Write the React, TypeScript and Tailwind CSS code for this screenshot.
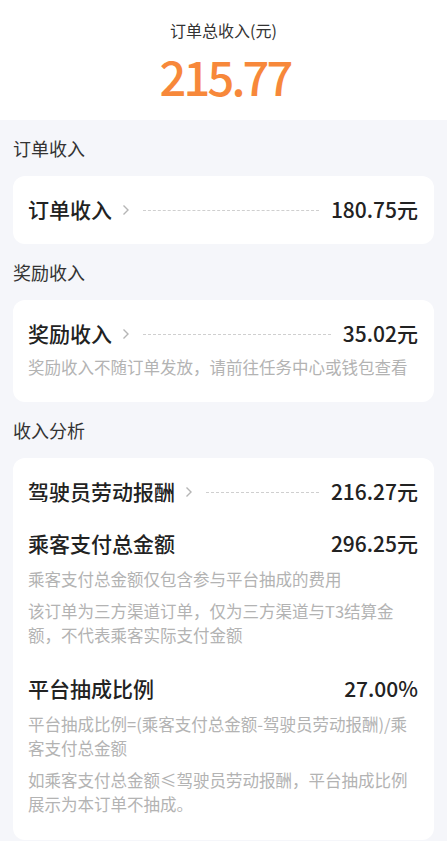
const font = { fontFamily: '"Noto Sans CJK SC", "Noto Sans", sans-serif' };

function Chevron() {
  return (
    <svg width="10" height="14" viewBox="0 0 10 14" className="shrink-0 ml-[9px]">
      <polyline points="2.5,2.5 7,7 2.5,11.5" fill="none" stroke="#b5b5b5" strokeWidth="1.4" />
    </svg>
  );
}

function LinkRow({ label, amount }: { label: string; amount: string }) {
  return (
    <div className="flex items-center h-[28px]">
      <span className="text-[21px] font-medium text-[#222]">{label}</span>
      <Chevron />
      <div className="flex-1 mx-[12px] border-t border-dashed border-[#cfcfcf]" />
      <span className="text-[21px] font-medium text-[#222]">{amount}</span>
    </div>
  );
}

function PlainRow({ label, amount }: { label: string; amount: string }) {
  return (
    <div className="flex items-center justify-between h-[28px]">
      <span className="text-[21px] font-medium text-[#222]">{label}</span>
      <span className="text-[21px] font-medium text-[#222]">{amount}</span>
    </div>
  );
}

function Note({ children, className = '' }: { children: React.ReactNode; className?: string }) {
  return <p className={`text-[16.5px] leading-[24px] text-[#b3b3b3] ${className}`}>{children}</p>;
}

function SectionTitle({ children }: { children: React.ReactNode }) {
  return (
    <div className="h-[56px] flex items-center px-[13px] text-[18px] text-[#333]">{children}</div>
  );
}

export default function App() {
  return (
    <div className="min-h-[841px] bg-[#f5f6fa]" style={font}>
      {/* Header */}
      <div className="bg-white h-[120px] flex flex-col items-center">
        <div className="mt-[18px] text-[16px] leading-[24px] text-[#333]">订单总收入(元)</div>
        <div className="mt-[6px] pl-[3px] text-[47px] leading-[56px] font-medium tracking-[-2.8px] text-[#f7883a]">
          215.77
        </div>
      </div>

      <SectionTitle>订单收入</SectionTitle>
      <div className="mx-[13px] bg-white rounded-[12px] pl-[15px] pr-[16px] py-[20px]">
        <LinkRow label="订单收入" amount="180.75元" />
      </div>

      <SectionTitle>奖励收入</SectionTitle>
      <div className="mx-[13px] bg-white rounded-[12px] pl-[15px] pr-[16px] pt-[20px] pb-[23px]">
        <LinkRow label="奖励收入" amount="35.02元" />
        <Note className="mt-[7px]">奖励收入不随订单发放，请前往任务中心或钱包查看</Note>
      </div>

      <SectionTitle>收入分析</SectionTitle>
      <div className="mx-[13px] bg-white rounded-[12px] pl-[15px] pr-[16px] pt-[20px] pb-[24px]">
        <LinkRow label="驾驶员劳动报酬" amount="216.27元" />
        <div className="mt-[24px]">
          <PlainRow label="乘客支付总金额" amount="296.25元" />
        </div>
        <Note className="mt-[9px]">乘客支付总金额仅包含参与平台抽成的费用</Note>
        <Note className="mt-[8px]">该订单为三方渠道订单，仅为三方渠道与T3结算金额，不代表乘客实际支付金额</Note>
        <div className="mt-[28px]">
          <PlainRow label="平台抽成比例" amount="27.00%" />
        </div>
        <Note className="mt-[9px]">平台抽成比例=(乘客支付总金额-驾驶员劳动报酬)/乘客支付总金额</Note>
        <Note className="mt-[8px]">如乘客支付总金额≤驾驶员劳动报酬，平台抽成比例展示为本订单不抽成。</Note>
      </div>
    </div>
  );
}
